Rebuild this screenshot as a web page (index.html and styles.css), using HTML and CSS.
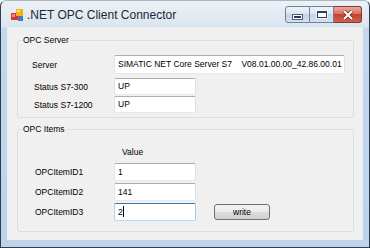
FILE: index.html
```html
<!DOCTYPE html>
<html lang="en">
<head>
    <meta charset="UTF-8">
    <title>.NET OPC Client Connector</title>
    <link rel="stylesheet" href="styles.css">
</head>
<body>
    <div class="window">
        <div class="titlebar">
            <svg class="app-icon" width="12" height="12" viewBox="0 0 12 12">
                <rect x="0" y="4" width="7" height="7" fill="#d23a2c"/>
                <rect x="1" y="5" width="3" height="3" fill="#f08a7a"/>
                <rect x="5" y="0" width="7" height="7" fill="#f2b413"/>
                <rect x="6" y="1" width="3" height="2" fill="#fde27a"/>
                <rect x="7" y="7" width="5" height="5" fill="#4f78b8"/>
            </svg>
            <span class="title">.NET OPC Client Connector</span>
            <div class="caption-buttons">
                <span class="cap-btn cap-min"><span class="glyph-min"></span></span>
                <span class="cap-btn cap-max"><span class="glyph-max"></span></span>
                <span class="cap-btn cap-close">
                    <svg width="12" height="10" viewBox="0 0 12 10">
                        <path d="M2 1 L10 9 M10 1 L2 9" stroke="#6b2a22" stroke-width="3.4"/>
                        <path d="M2 1 L10 9 M10 1 L2 9" stroke="#ffffff" stroke-width="2"/>
                    </svg>
                </span>
            </div>
        </div>

        <div class="client">
            <fieldset class="group group-server">
                <legend>OPC Server</legend>
                <div class="row row-server">
                    <label>Server</label>
                    <div class="textbox wide">SIMATIC NET Core Server S7    V08.01.00.00_42.86.00.01</div>
                </div>
                <div class="row row-status">
                    <label>Status S7-300</label>
                    <div class="textbox">UP</div>
                </div>
                <div class="row row-status">
                    <label>Status S7-1200</label>
                    <div class="textbox">UP</div>
                </div>
            </fieldset>

            <fieldset class="group group-items">
                <legend>OPC Items</legend>
                <div class="value-head">Value</div>
                <div class="row row-item">
                    <label>OPCItemID1</label>
                    <div class="textbox">1</div>
                </div>
                <div class="row row-item">
                    <label>OPCItemID2</label>
                    <div class="textbox">141</div>
                </div>
                <div class="row row-item">
                    <label>OPCItemID3</label>
                    <div class="textbox focused">2<span class="caret"></span></div>
                    <button class="btn-write">write</button>
                </div>
            </fieldset>
        </div>
    </div>
</body>
</html>
```

FILE: styles.css
```css
* {
    box-sizing: border-box;
}

body {
    margin: 0;
    width: 370px;
    height: 248px;
    overflow: hidden;
    background: #ffffff;
    font-family: 'Liberation Sans', Arial, sans-serif;
    font-size: 8.5px;
    color: #000000;
}

.window {
    width: 370px;
    height: 248px;
    display: flex;
    flex-direction: column;
    padding: 0 6px 7px 6px;
    border: 1px solid #2d3e50;
    border-top-color: #a9b6c4;
    border-radius: 6px 6px 0 0;
    background: linear-gradient(to bottom, #edf1f5 0, #dbe5ef 26px, #c4d8ec 27px, #bcd3ea 100%);
}

/* title bar */
.titlebar {
    height: 26px;
    flex: none;
    display: flex;
    align-items: center;
    padding-top: 1px;
}

.app-icon {
    margin-left: 4px;
    flex: none;
}

.title {
    margin-left: 4px;
    font-size: 12px;
    color: #1c2836;
}

.caption-buttons {
    margin-left: auto;
    margin-right: 1px;
    align-self: flex-start;
    margin-top: 4px;
    display: flex;
}

.cap-btn {
    height: 17px;
    display: flex;
    align-items: center;
    justify-content: center;
    border: 1px solid #6f819a;
    background: linear-gradient(to bottom, #eef3f9 0%, #dbe5f1 45%, #c5d4e6 50%, #d2e0ef 100%);
}

.cap-min {
    width: 25px;
    border-radius: 3px 0 0 3px;
}

.cap-max {
    width: 24px;
    border-left: none;
}

.cap-close {
    width: 28px;
    border-left: none;
    border-color: #7a3a32;
    border-radius: 0 3px 3px 0;
    background: linear-gradient(to bottom, #e9a99c 0%, #d8705f 45%, #c5412f 50%, #d1604b 100%);
}

.glyph-min {
    width: 9px;
    height: 4px;
    margin-top: 5px;
    background: #2d3d55;
    border: 1px solid #ffffff;
    outline: 1px solid #4c5d75;
}

.glyph-max {
    width: 10px;
    height: 7px;
    border: 1px solid #2d3d55;
    border-top-width: 2px;
    background: #ffffff;
    box-shadow: 0 0 0 1px #f4f7fb;
}

/* client area */
.client {
    flex: 1;
    background: #f0f0f0;
    border: 1px solid #e6eef7;
    padding: 6px 8px 0 9px;
}

.group {
    margin: 0;
    border: 1px solid #d5dfe5;
    border-radius: 3px;
    min-width: 0;
}

.group legend {
    padding: 0 1px;
    line-height: 12px;
}

.group-server {
    padding: 9px 8px 4px 4px;
}

.group-items {
    margin-top: 5px;
    padding: 0 8px 10px 4px;
}

.row {
    display: flex;
    align-items: center;
    margin-left: 10px;
}

.row label {
    width: 82px;
    flex: none;
}

.row-server {
    margin-bottom: 4px;
}

.row-status label {
    padding-left: 2px;
}

.row-status + .row-status {
    margin-top: 1px;
}

.row-item label {
    padding-left: 3px;
}

.row-item + .row-item {
    margin-top: 2px;
}

.value-head {
    margin: 10px 0 4px 100px;
    line-height: 14px;
}

.textbox {
    width: 82px;
    height: 18px;
    line-height: 16px;
    padding: 0 3px;
    white-space: pre;
    background: #ffffff;
    border: 1px solid #abadb3;
    border-color: #abadb3 #dbdfe6 #e3e9ef #e2e3ea;
    border-radius: 2px;
}

.row-status .textbox {
    height: 17px;
    line-height: 15px;
}

.textbox.wide {
    height: 19px;
    line-height: 17px;
    width: 231px;
}

.textbox.focused {
    border-color: #3d7bad #a4c9e3 #b7d9ed #b5cfe7;
}

.caret {
    display: inline-block;
    width: 1px;
    height: 11px;
    vertical-align: -2px;
    background: #000000;
}

.btn-write {
    margin-left: 18px;
    width: 56px;
    height: 16px;
    padding: 0;
    font-family: inherit;
    font-size: 8.5px;
    color: #000000;
    border: 1px solid #707070;
    border-radius: 3px;
    background: linear-gradient(to bottom, #f2f2f2 0%, #ebebeb 50%, #dddddd 50%, #cfcfcf 100%);
}
```
